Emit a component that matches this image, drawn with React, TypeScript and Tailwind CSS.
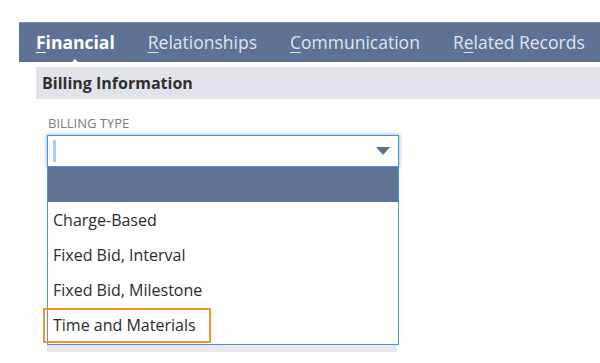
const tabs = [
  { pre: "", key: "F", post: "inancial", active: true },
  { pre: "", key: "R", post: "elationships" },
  { pre: "", key: "C", post: "ommunication" },
  { pre: "R", key: "e", post: "lated Records" },
];

const options = ["Charge-Based", "Fixed Bid, Interval", "Fixed Bid, Milestone", "Time and Materials"];

export default function App() {
  return (
    <div
      className="w-[600px] h-[363px] bg-white overflow-hidden pt-[22px] pl-[19px]"
      style={{ fontFamily: '"Open Sans", "Noto Sans", sans-serif' }}
    >
      {/* tab strip */}
      <div className="relative h-[40px] bg-[#5d7294] border-t border-[#7a8cab] flex items-center pl-[17px] gap-[33px]">
        {tabs.map((t) => (
          <div
            key={t.post}
            className={
              "relative text-[17.5px] leading-none " +
              (t.active ? "font-bold text-white" : "text-[#dfe6f0]")
            }
          >
            {t.pre}
            <span className="underline underline-offset-[3px] decoration-1">{t.key}</span>
            {t.post}
            {t.active && (
              <span className="absolute left-1/2 -translate-x-1/2 top-[25px] w-0 h-0 border-l-[7px] border-r-[7px] border-b-[7px] border-l-transparent border-r-transparent border-b-white" />
            )}
          </div>
        ))}
      </div>

      <div className="pl-[17px]">
        <div className="mt-[5px] h-[32px] bg-[#e0e5ec] flex items-center pl-[6px] text-[16px] font-bold text-[#2f2f2f]">
          Billing Information
        </div>

        <div className="mt-[16px] ml-[12px] text-[13px] leading-[16px] text-[#7a7a7a] uppercase">
          Billing Type
        </div>

        <div className="ml-[11px] w-[352px] mt-[4px]">
          <div className="h-[32px] border border-[#4a90f0] shadow-[0_0_3px_1px_rgba(90,156,240,0.55)] bg-white flex items-center justify-between pl-[5px] pr-[8px]">
            <span className="w-[3px] h-[22px] bg-[#a9cdf8]" />
            <span className="w-0 h-0 border-l-[7px] border-r-[7px] border-t-[8px] border-l-transparent border-r-transparent border-t-[#5f7191]" />
          </div>

          <div className="relative border border-t-0 border-[#4a90f0] bg-white">
            <div className="h-[35px] bg-[#5f7393]" />
            {options.map((o) => (
              <div key={o} className="relative h-[35px] flex items-center pl-[5px] text-[16px] text-[#2b2b2b]">
                {o}
                {o === "Time and Materials" && (
                  <span className="absolute left-[-5px] top-[1px] w-[168px] h-[35px] border-2 border-[#f29430]" />
                )}
              </div>
            ))}
            <div className="h-[2px]" />
          </div>
          <div className="h-[7px] mr-[2px] bg-[#e8e8e8]" />
        </div>
      </div>
    </div>
  );
}
